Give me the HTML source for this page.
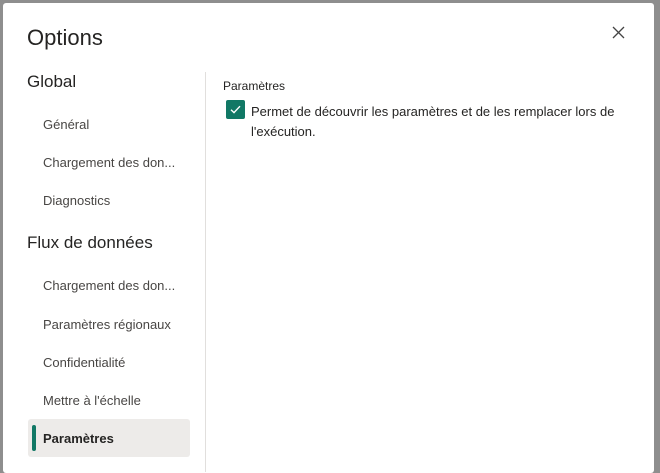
<!DOCTYPE html>
<html><head><meta charset="utf-8"><style>
html,body{margin:0;padding:0;width:660px;height:467px;overflow:hidden;background:#8e8e8e;font-family:"Liberation Sans",sans-serif;color:#252423}
.d{position:absolute;left:3px;top:3px;width:651px;height:470px;background:#fff;border-radius:3px}
.t{position:absolute;white-space:nowrap}
.h{font-size:17px;color:#252423}
.i{font-size:13px;color:#484644}
</style></head><body>
<div class="d"></div>
<div class="t" style="left:27px;top:25px;font-size:22px;color:#252423">Options</div>
<svg style="position:absolute;left:612px;top:26px" width="13" height="13" viewBox="0 0 13 13"><path d="M1 1L12 12M12 1L1 12" stroke="#444" stroke-width="1.3"/></svg>
<div class="t h" style="left:27px;top:72px">Global</div>
<div class="t i" style="left:43px;top:117px">Général</div>
<div class="t i" style="left:43px;top:155px">Chargement des don...</div>
<div class="t i" style="left:43px;top:193px">Diagnostics</div>
<div class="t h" style="left:27px;top:233px">Flux de données</div>
<div class="t i" style="left:43px;top:278px">Chargement des don...</div>
<div class="t i" style="left:43px;top:317px">Paramètres régionaux</div>
<div class="t i" style="left:43px;top:355px">Confidentialité</div>
<div class="t i" style="left:43px;top:393px">Mettre à l'échelle</div>
<div style="position:absolute;left:28px;top:419px;width:162px;height:38px;background:#edebe9;border-radius:3px"></div>
<div style="position:absolute;left:32px;top:425px;width:4px;height:26px;background:#117865;border-radius:2px"></div>
<div class="t" style="left:43px;top:431px;font-size:13px;font-weight:bold;color:#252423">Paramètres</div>
<div style="position:absolute;left:205px;top:72px;width:1px;height:400px;background:#e1dfdd"></div>
<div class="t" style="left:223px;top:79px;font-size:12px;color:#252423">Paramètres</div>
<div style="position:absolute;left:226px;top:100px;width:19px;height:19px;background:#117865;border-radius:2px"></div>
<svg style="position:absolute;left:226px;top:100px" width="19" height="19" viewBox="0 0 19 19"><path d="M5 9.8L8 12.6L14 6.2" fill="none" stroke="#fff" stroke-width="1.4"/></svg>
<div class="t" style="left:251px;top:102px;font-size:13px;line-height:20px;color:#252423">Permet de découvrir les paramètres et de les remplacer lors de<br>l'exécution.</div>
</body></html>
